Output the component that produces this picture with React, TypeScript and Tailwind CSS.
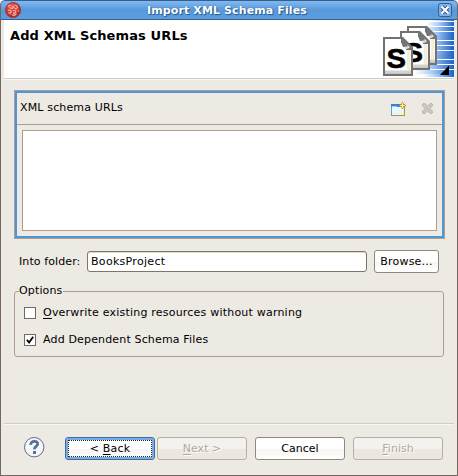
import type { ReactNode } from "react";

function Logo() {
  return (
    <svg width="16" height="16" viewBox="0 0 16 16" className="shrink-0">
      <defs>
        <radialGradient id="ball" cx="0.4" cy="0.3" r="0.8">
          <stop offset="0" stopColor="#e4584c" />
          <stop offset="1" stopColor="#b0181a" />
        </radialGradient>
      </defs>
      <circle cx="8" cy="8" r="7.8" fill="url(#ball)" />
      <circle cx="8" cy="8" r="7.4" fill="none" stroke="#9b3136" strokeWidth="0.8" />
      <path d="M3 5Q4 3 6 3M7 3.5L9 5L7 6.5L4.5 5.5M9.5 3Q12 3 12.5 5.5L11 7L9.5 6M3 8.5L5 8L6.5 9.5L5 11.5L3.5 10.5M8 8.5H10L11 10L9.5 11.5L8 10.5M7 12.5L9 13.5L11.5 12M13 8L13.5 9.5" fill="none" stroke="#f3b4a8" strokeWidth="1.1" />
    </svg>
  );
}

function Sheet({ x, y, letter }: { x: number; y: number; letter?: boolean }) {
  return (
    <g transform={`translate(${x} ${y})`}>
      <path d="M0 0H20L30 10V39H0Z" fill="#727272" />
      <path d="M2 2H18V5L20 10H28V36.5H2Z" fill="#fff" />
      <path d="M24 13H27.5V36H24Z" fill="#f3f0d6" />
      <path d="M2 33.5H28V36.5H2Z" fill="#d2d2d2" />
      <path d="M18 2H21L29 10V13H23V10H20V6H18Z" fill="#747474" />
      <path d="M22 9.5H24.5V7.5L27 10.5L24 12H22Z" fill="#ddd" />
      {letter && (
        <text x="3.6" y="30.5" fontFamily="Liberation Sans, Arial, sans-serif" fontWeight="700" fontSize="28" textLength="19.5" lengthAdjust="spacingAndGlyphs" fill="#000" stroke="#000" strokeWidth="0.6">S</text>
      )}
    </g>
  );
}

const stripes = [
  [2, 48], [7, 44], [12, 42], [16, 41], [21, 40], [26, 38],
  [31, 36], [35, 34], [40, 33], [45, 33], [50, 36], [54, 44],
];

function Banner() {
  return (
    <svg width="75" height="58" viewBox="0 0 75 58" className="shrink-0">
      <defs>
        <linearGradient id="stripe" x1="0" x2="1" y1="0" y2="0">
          <stop offset="0" stopColor="#fff" />
          <stop offset="0.45" stopColor="#a9c9f5" />
          <stop offset="1" stopColor="#1b62c9" />
        </linearGradient>
      </defs>
      <rect x="52" y="0" width="23" height="1" fill="url(#stripe)" />
      {stripes.map(([y, x]) => (
        <rect key={y} x={x} y={y} width={75 - x} height={y === 54 ? 3 : 4} fill="url(#stripe)" />
      ))}
      <Sheet x={28} y={6} />
      <Sheet x={21} y={11} letter />
      <Sheet x={4} y={17} letter />
      <path d="M61 55L70 45.5V55Z" fill="#000" />
    </svg>
  );
}

function AddIcon() {
  return (
    <svg width="16" height="16" viewBox="0 0 16 16">
      <rect x="0.5" y="3.5" width="13" height="11" fill="#e4f7fd" stroke="#a99656" />
      <path d="M0 3H9V6H0Z" fill="#3e81d4" />
      <path d="M1 5.5H6" stroke="#9bcaf3" />
      <path d="M0.5 6V14" stroke="#6d9fc4" />
      <path d="M8 14Q12 13 12.5 7H13V14Z" fill="#fff0a8" />
      <path d="M11.5 0.5L13 3L15.5 4.5L13 6L11.5 8.5L10 6L7.5 4.5L10 3Z" fill="#b89424" />
      <path d="M11.5 2V7M9.5 4.5H13.8" stroke="#fff6bd" />
    </svg>
  );
}

function DeleteIcon() {
  return (
    <svg width="13" height="13" viewBox="0 0 13 13">
      <path d="M3 1L6.5 4L10 1L12 3L9 6.5L12 10L10 12L6.5 9L3 12L1 10L4 6.5L1 3Z" fill="#ccc6c4" stroke="#bbb5b2" strokeLinejoin="round" />
    </svg>
  );
}

function DialogButton({ children, disabled, focused }: { children: ReactNode; disabled?: boolean; focused?: boolean }) {
  const tone = disabled
    ? "border-[#b8aea1] bg-[linear-gradient(#f4f2ee_0_50%,#ebe8e3_51%_100%)] text-[#b4a99a] [text-shadow:1px_1px_#fff]"
    : focused
      ? "border-[#4b6a8d] bg-[linear-gradient(#fff_0_50%,#f5f4f2_51%,#fff)] shadow-[inset_0_0_0_2px_#6eaeed] text-black tracking-[0.2px]"
      : "border-[#948779] bg-[linear-gradient(#fff_0_50%,#f6f5f2_51%,#fff)] text-black";
  return (
    <button className={`relative h-[23px] w-[90px] shrink-0 rounded-[3px] border ${tone}`} disabled={disabled}>
      {focused && <span className="absolute inset-[2px] border border-dotted border-[#222]" />}
      {children}
    </button>
  );
}

function Key({ children }: { children: ReactNode }) {
  return <span className="underline decoration-1 underline-offset-2">{children}</span>;
}

export default function App() {
  return (
    <div className="flex h-[476px] w-[458px] flex-col overflow-hidden rounded-t-[5px] border-x border-b border-[#75675f] bg-[#ede9e3] font-['DejaVu_Sans',sans-serif] text-[11px] leading-[13px] text-black">
      <header className="-mx-px flex h-5 shrink-0 items-center rounded-t-[5px] border border-[#355d8d] bg-[linear-gradient(#83b9f0,#5799dc_50%,#5b9fdf)] pr-[5px] pl-1">
        <Logo />
        <h1 className="flex-1 pr-[5px] text-center text-[11px] font-bold tracking-[0.12px] whitespace-nowrap text-white [text-shadow:0_0_1px_#24568e,1px_1px_1px_#24568e]">Import XML Schema Files</h1>
        <svg width="14" height="14" viewBox="0 0 14 14" className="shrink-0">
          <rect x="0.5" y="0.5" width="13" height="13" rx="2" fill="#7eb0e6" stroke="#315e93" />
          <path d="M4 4L10 10M10 4L4 10" stroke="#315e93" strokeWidth="4" />
          <path d="M3.5 3.5L10.5 10.5M10.5 3.5L3.5 10.5" stroke="#fff" strokeWidth="2" />
        </svg>
      </header>

      <section className="mx-[3px] flex h-[58px] shrink-0 justify-between bg-white">
        <h2 className="pt-[8px] pl-[6px] text-[13px] leading-[15px] font-bold tracking-[0.12px] whitespace-nowrap">Add XML Schemas URLs</h2>
        <Banner />
      </section>
      <div className="mx-[3px] h-[2px] shrink-0 border-t border-[#d1cdc3] bg-[#f8f7f4]" />

      <main className="flex h-[343px] shrink-0 flex-col pt-[10px] pr-3 pl-[13px]">
        <section className="h-[149px] shrink-0 border border-[#ad9f8c] bg-[#5294d8] p-[2px]">
          <div className="flex h-full flex-col bg-[#ede9e3]">
            <div className="flex h-[32px] shrink-0 items-center border-b border-[#ad9f8c] pr-[8px] pl-[3px]">
              <span className="flex-1 pb-[2px] tracking-[0.15px]">XML schema URLs</span>
              <AddIcon />
              <span className="ml-[14px]"><DeleteIcon /></span>
            </div>
            <div className="mx-[5px] mt-[5px] mb-[5px] flex-1 border border-[#ad9f8c] bg-white" />
          </div>
        </section>

        <div className="mt-[11px] flex h-[23px] shrink-0 items-center">
          <label className="w-[73px] pb-px pl-[5px] tracking-[0.1px] whitespace-nowrap">Into folder:</label>
          <input className="h-[21px] w-[280px] rounded-[3px] border border-[#827568] bg-white px-[3px] tracking-[0.3px] shadow-[inset_0_1px_#ddd9d3] outline-none" defaultValue="BooksProject" />
          <button className="ml-[7px] h-[23px] w-[65px] rounded-[3px] border border-[#948779] bg-[linear-gradient(#fff_0_50%,#f6f5f2_51%,#fff)] pb-px tracking-[0.2px] whitespace-nowrap">Browse...</button>
        </div>

        <fieldset className="mt-[12px] mr-px h-[72px] shrink-0 rounded-[3px] border border-[#ad9f8c] px-[9px]">
          <legend className="-ml-[5px] pb-[2px] leading-[11px] tracking-[0.15px]">Options</legend>
          <label className="mt-[9px] flex h-[13px] items-start">
            <span className="h-[12px] w-[12px] border border-[#75695e] bg-white" />
            <span className="-mt-px ml-[7px] tracking-[0.21px] whitespace-nowrap"><Key>O</Key>verwrite existing resources without warning</span>
          </label>
          <label className="mt-[14px] flex h-[13px] items-start">
            <span className="flex h-[12px] w-[12px] items-center justify-center border border-[#75695e] bg-white">
              <svg width="10" height="10" viewBox="0 0 10 11"><path d="M1.5 5.2L4 8.2L8.5 2" fill="none" stroke="#000" strokeWidth="2" /></svg>
            </span>
            <span className="-mt-px ml-[7px] tracking-[0.16px] whitespace-nowrap">Add Dependent Schema Files</span>
          </label>
        </fieldset>
      </main>

      <div className="mx-[3px] h-[2px] shrink-0 border-t border-[#d1cdc3] bg-[#f8f7f4]" />
      <footer className="flex shrink-0 pt-[12px] pl-[23px]">
        <svg width="21" height="21" viewBox="0 0 21 21" className="shrink-0">
          <circle cx="10.2" cy="10.2" r="9.7" fill="#f6f6f5" stroke="#5b6e91" />
          <path d="M6.7 7.8C6.4 3.2 14.1 3.3 13.7 7.1C13.5 9.3 10.2 9.6 10.4 12.3" fill="none" stroke="#596f99" strokeWidth="2.7" />
          <rect x="9" y="14" width="3" height="3" fill="#596f99" />
        </svg>
        <div className="ml-[20px] flex">
          <DialogButton focused>&lt; <Key>B</Key>ack</DialogButton>
          <span className="w-[2px]" />
          <DialogButton disabled><Key>N</Key>ext &gt;</DialogButton>
          <span className="w-[8px]" />
          <DialogButton>Cancel</DialogButton>
          <span className="w-[8px]" />
          <DialogButton disabled><Key>F</Key>inish</DialogButton>
        </div>
      </footer>
    </div>
  );
}
